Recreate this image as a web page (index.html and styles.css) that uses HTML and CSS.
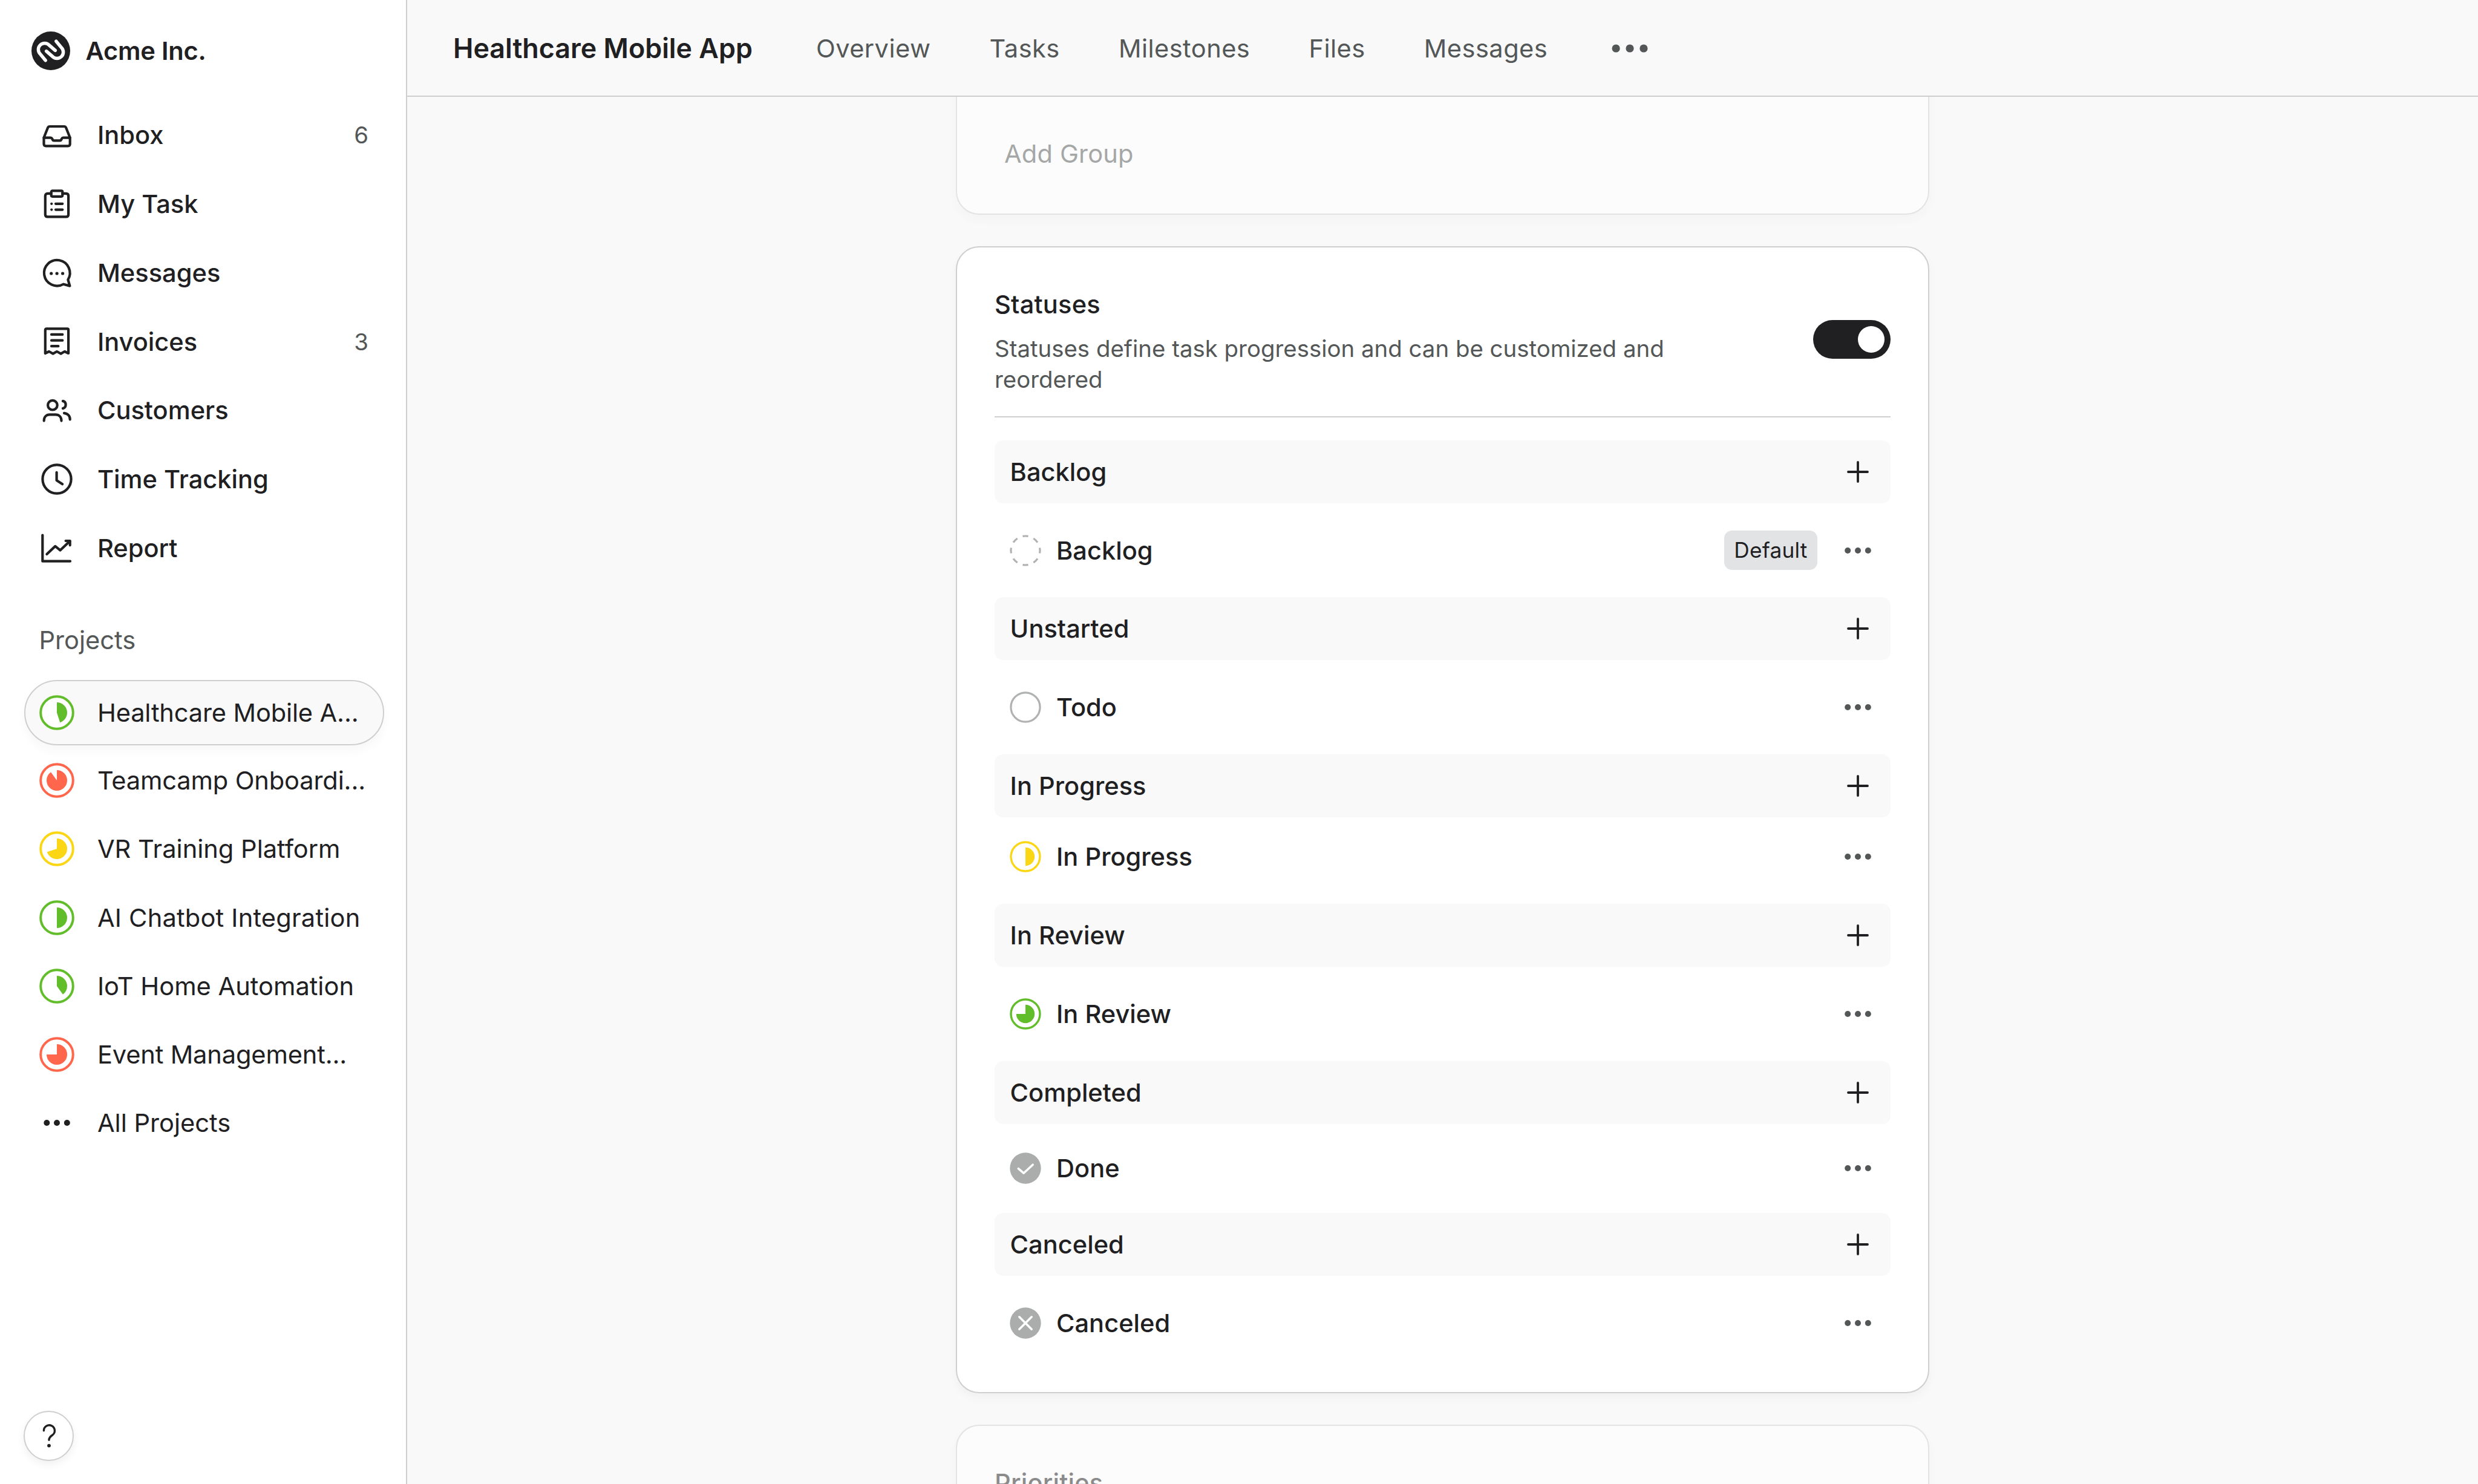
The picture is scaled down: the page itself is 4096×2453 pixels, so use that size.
FILE: index.html
```html
<!DOCTYPE html>
<html lang="en">
<head>
    <meta charset="UTF-8">
    <meta name="viewport" content="width=device-width, initial-scale=1.0">
    <title>Healthcare Mobile App</title>
    <link rel="stylesheet" href="styles.css">
</head>
<body>
    <aside class="sidebar">
        <div class="brand">
            <svg class="brand-logo" viewBox="0 0 70 70">
                <circle cx="35" cy="35" r="35" fill="#202022"/>
                <g fill="none" stroke="#fff" stroke-width="6" stroke-linecap="round">
                    <path d="M25.3 52.3L15.6 40.5A11.3 11.3 0 0 1 32 24.8L43 34.3"/>
                    <path d="M25.3 52.3L15.6 40.5A11.3 11.3 0 0 1 32 24.8L43 34.3" transform="rotate(180 35 35)"/>
                </g>
            </svg>
            <span>Acme Inc.</span>
        </div>

        <nav class="menu">
            <a class="menu-item">
                <svg class="icon" viewBox="0 0 58 58">
                    <path d="M7.5 33.6L14 17.2Q15 15 17.3 15H41Q43.2 15 44.2 17.2L50.7 33.6V44Q50.7 47.3 47.4 47.3H10.8Q7.5 47.3 7.5 44Z"/>
                    <path d="M7.5 33.6H18.6Q20.4 33.6 21 35L22 37Q22.6 38.3 24.2 38.3H34Q35.6 38.3 36.2 37L37.2 35Q37.8 33.6 39.6 33.6H50.7"/>
                </svg>
                <span>Inbox</span>
                <span class="count">6</span>
            </a>
            <a class="menu-item">
                <svg class="icon" viewBox="0 0 58 58">
                    <path d="M19.7 11.9H13.8Q9.8 11.9 9.8 15.9V46.4Q9.8 50.4 13.8 50.4H44.1Q48.1 50.4 48.1 46.4V15.9Q48.1 11.9 44.1 11.9H38.3"/>
                    <rect x="19.7" y="7.3" width="18.6" height="9.5" rx="2"/>
                    <path d="M20.2 28.8h.1M27 28.8H38.3M20.2 38.6h.1M27 38.6H38.3"/>
                </svg>
                <span>My Task</span>
            </a>
            <a class="menu-item">
                <svg class="icon" viewBox="0 0 58 58">
                    <path d="M39.8 47.7A21.3 21.3 0 1 1 47.4 40.3L50.4 50.6Z"/>
                    <g class="solid"><circle cx="19.7" cy="30" r="2.6"/><circle cx="29.1" cy="30" r="2.6"/><circle cx="38.6" cy="30" r="2.6"/></g>
                </svg>
                <span>Messages</span>
            </a>
            <a class="menu-item">
                <svg class="icon" viewBox="0 0 58 58">
                    <path d="M9.8 48V9.4Q9.8 7.4 11.8 7.4H46.1Q48.1 7.4 48.1 9.4V48L41.8 45L35.6 48.6L29 45L22.6 48.6L16.1 45Z"/>
                    <path d="M20 16.9H38.3M20 26.7H38.3M20 36.2H31.4"/>
                </svg>
                <span>Invoices</span>
                <span class="count">3</span>
            </a>
            <a class="menu-item">
                <svg class="icon" viewBox="0 0 58 58">
                    <circle cx="21.9" cy="20.7" r="7.8"/>
                    <path d="M38.9 13.9A6.3 6.3 0 0 1 38.9 26.1"/>
                    <path d="M7.7 46.6C7.7 40.5 11.5 36.4 17 36.4H27C32.7 36.4 36.5 40.5 36.5 46.6"/>
                    <path d="M41 33.8C47 34.5 50.7 38.5 50.7 44.4"/>
                </svg>
                <span>Customers</span>
            </a>
            <a class="menu-item">
                <svg class="icon" viewBox="0 0 58 58">
                    <circle cx="29" cy="29" r="23.6"/>
                    <path d="M28.6 17.8V31L38.2 37.2"/>
                </svg>
                <span>Time Tracking</span>
            </a>
            <a class="menu-item">
                <svg class="icon" viewBox="0 0 58 58">
                    <path d="M5.3 7.6V50.7H51"/>
                    <path d="M12.4 39L26.3 25.9L34.6 32.6L50.4 17.4"/>
                    <path d="M43.6 17H50.7V24.3"/>
                </svg>
                <span>Report</span>
            </a>
        </nav>

        <h2 class="section-label">Projects</h2>
        <nav class="projects">
            <a class="project active green">
                <svg class="progress" viewBox="0 0 58 58"><circle class="ring" cx="29" cy="29" r="26.8"/><circle class="pie" cx="29" cy="29" r="8.5" pathLength="100" stroke-dasharray="45 100"/></svg>
                <span class="shortened">Healthcare Mobile A...</span>
            </a>
            <a class="project red">
                <svg class="progress" viewBox="0 0 58 58"><circle class="ring" cx="29" cy="29" r="26.8"/><circle class="pie" cx="29" cy="29" r="8.5" pathLength="100" stroke-dasharray="90 100"/></svg>
                <span class="shortened">Teamcamp Onboardi...</span>
            </a>
            <a class="project yellow">
                <svg class="progress" viewBox="0 0 58 58"><circle class="ring" cx="29" cy="29" r="26.8"/><circle class="pie" cx="29" cy="29" r="8.5" pathLength="100" stroke-dasharray="70 100"/></svg>
                <span>VR Training Platform</span>
            </a>
            <a class="project green">
                <svg class="progress" viewBox="0 0 58 58"><circle class="ring" cx="29" cy="29" r="26.8"/><circle class="pie" cx="29" cy="29" r="8.5" pathLength="100" stroke-dasharray="50 100"/></svg>
                <span class="spaced">AI Chatbot Integration</span>
            </a>
            <a class="project green">
                <svg class="progress" viewBox="0 0 58 58"><circle class="ring" cx="29" cy="29" r="26.8"/><circle class="pie" cx="29" cy="29" r="8.5" pathLength="100" stroke-dasharray="40 100"/></svg>
                <span>IoT Home Automation</span>
            </a>
            <a class="project red">
                <svg class="progress" viewBox="0 0 58 58"><circle class="ring" cx="29" cy="29" r="26.8"/><circle class="pie" cx="29" cy="29" r="8.5" pathLength="100" stroke-dasharray="75 100"/></svg>
                <span class="shortened">Event Management...</span>
            </a>
            <a class="project">
                <svg class="icon" viewBox="0 0 58 58"><g class="solid"><circle cx="12.3" cy="29" r="5"/><circle cx="29" cy="29" r="5"/><circle cx="45.8" cy="29" r="5"/></g></svg>
                <span>All Projects</span>
            </a>
        </nav>

        <button class="help" aria-label="Help">
            <svg viewBox="-24 -24 48 48"><path d="M-8.6 -9.2A9 9 0 1 1 5.8 -2C2.2 .4 0 2.2 0 6.2"/><circle cx="0" cy="15.6" r="2.9"/></svg>
        </button>
    </aside>

    <main class="main">
        <header class="topbar">
            <h1>Healthcare Mobile App</h1>
            <nav class="tabs">
                <a>Overview</a>
                <a>Tasks</a>
                <a>Milestones</a>
                <a>Files</a>
                <a>Messages</a>
            </nav>
            <svg class="tabs-more" viewBox="0 0 60 20"><circle cx="7.1" cy="10" r="6.6"/><circle cx="30" cy="10" r="6.6"/><circle cx="52.9" cy="10" r="6.6"/></svg>
        </header>

        <div class="content">
            <section class="card faded card-groups">
                <p class="add-group">Add Group</p>
            </section>

            <section class="card">
                <div class="card-head">
                    <div class="card-text">
                        <h3>Statuses</h3>
                        <p>Statuses define task progression and can be customized and reordered</p>
                    </div>
                    <div class="toggle"><span class="knob"></span></div>
                </div>

                <div class="group">
                    <span>Backlog</span>
                    <svg class="plus" viewBox="0 0 40 40"><path d="M20 4V36M4 20H36"/></svg>
                </div>
                <div class="status">
                    <svg class="status-icon" viewBox="0 0 52 52"><circle class="dashed" cx="26" cy="26" r="24" pathLength="80" stroke-dasharray="5 5" stroke-dashoffset="2.5"/></svg>
                    <span>Backlog</span>
                    <span class="badge">Default</span>
                    <svg class="dots" viewBox="0 0 50 12"><circle cx="8.2" cy="6" r="5"/><circle cx="25" cy="6" r="5"/><circle cx="41.8" cy="6" r="5"/></svg>
                </div>

                <div class="group">
                    <span>Unstarted</span>
                    <svg class="plus" viewBox="0 0 40 40"><path d="M20 4V36M4 20H36"/></svg>
                </div>
                <div class="status">
                    <svg class="status-icon" viewBox="0 0 52 52"><circle class="dashed" cx="26" cy="26" r="24.1"/></svg>
                    <span>Todo</span>
                    <svg class="dots" viewBox="0 0 50 12"><circle cx="8.2" cy="6" r="5"/><circle cx="25" cy="6" r="5"/><circle cx="41.8" cy="6" r="5"/></svg>
                </div>

                <div class="group">
                    <span>In Progress</span>
                    <svg class="plus" viewBox="0 0 40 40"><path d="M20 4V36M4 20H36"/></svg>
                </div>
                <div class="status status-progress">
                    <svg class="status-icon yellow" viewBox="0 0 52 52"><circle class="ring" cx="26" cy="26" r="24"/><circle class="pie" cx="26" cy="26" r="7.6" pathLength="100" stroke-dasharray="50 100"/></svg>
                    <span>In Progress</span>
                    <svg class="dots" viewBox="0 0 50 12"><circle cx="8.2" cy="6" r="5"/><circle cx="25" cy="6" r="5"/><circle cx="41.8" cy="6" r="5"/></svg>
                </div>

                <div class="group">
                    <span>In Review</span>
                    <svg class="plus" viewBox="0 0 40 40"><path d="M20 4V36M4 20H36"/></svg>
                </div>
                <div class="status">
                    <svg class="status-icon green" viewBox="0 0 52 52"><circle class="ring" cx="26" cy="26" r="24"/><circle class="pie" cx="26" cy="26" r="7.6" pathLength="100" stroke-dasharray="75 100"/></svg>
                    <span>In Review</span>
                    <svg class="dots" viewBox="0 0 50 12"><circle cx="8.2" cy="6" r="5"/><circle cx="25" cy="6" r="5"/><circle cx="41.8" cy="6" r="5"/></svg>
                </div>

                <div class="group">
                    <span>Completed</span>
                    <svg class="plus" viewBox="0 0 40 40"><path d="M20 4V36M4 20H36"/></svg>
                </div>
                <div class="status status-done">
                    <svg class="status-icon" viewBox="0 0 52 52"><circle cx="26" cy="26" r="25.7" fill="#abacac"/><path class="mark" d="M14.3 26.6L23 34.2L38.2 20.2"/></svg>
                    <span>Done</span>
                    <svg class="dots" viewBox="0 0 50 12"><circle cx="8.2" cy="6" r="5"/><circle cx="25" cy="6" r="5"/><circle cx="41.8" cy="6" r="5"/></svg>
                </div>

                <div class="group">
                    <span>Canceled</span>
                    <svg class="plus" viewBox="0 0 40 40"><path d="M20 4V36M4 20H36"/></svg>
                </div>
                <div class="status">
                    <svg class="status-icon" viewBox="0 0 52 52"><circle cx="26" cy="26" r="25.7" fill="#abacac"/><path class="mark" d="M15.8 15.8L36.2 36.2M36.2 15.8L15.8 36.2"/></svg>
                    <span>Canceled</span>
                    <svg class="dots" viewBox="0 0 50 12"><circle cx="8.2" cy="6" r="5"/><circle cx="25" cy="6" r="5"/><circle cx="41.8" cy="6" r="5"/></svg>
                </div>
            </section>

            <section class="card faded">
                <div class="card-head">
                    <div class="card-text">
                        <h3>Priorities</h3>
                    </div>
                </div>
            </section>
        </div>
    </main>
</body>
</html>
```
FILE: styles.css
```css
* {
    box-sizing: border-box;
}

body {
    margin: 0;
    display: flex;
    height: 2453px;
    overflow: hidden;
    font-family: Inter, "Liberation Sans", sans-serif;
    font-size: 41.6px;
    color: #202022;
    background-color: #f9f9f9;
}

h1, h2, h3, p {
    margin: 0;
}

svg {
    flex-shrink: 0;
}

/* Sidebar */
.sidebar {
    display: flex;
    flex-direction: column;
    flex-shrink: 0;
    width: 673px;
    padding: 52px 36px 38px 40px;
    background-color: #fff;
    border-right: 2px solid #cfcfcf;
}

.brand {
    display: flex;
    align-items: center;
    gap: 25.6px;
    height: 64px;
    padding-left: 12px;
    margin-bottom: 50.6px;
    font-weight: 600;
    letter-spacing: -0.2px;
}

.brand-logo {
    width: 64px;
    height: 64px;
}

.menu-item, .project {
    display: flex;
    align-items: center;
    gap: 38.4px;
    padding-left: 24.5px;
    white-space: nowrap;
}

.menu-item {
    height: 113.7px;
    font-weight: 500;
}

.icon, .progress {
    width: 58px;
    height: 58px;
}

.icon {
    fill: none;
    stroke: #202022;
    stroke-width: 4.2;
    stroke-linecap: round;
    stroke-linejoin: round;
}

.icon .solid {
    fill: #202022;
    stroke: none;
}

.count {
    margin-left: auto;
    padding-right: 26px;
    font-size: 38.4px;
    font-weight: 400;
    color: #545757;
}

.section-label {
    height: 50px;
    margin: 71px 0 40.4px 24.5px;
    line-height: 50px;
    font-size: 41.6px;
    font-weight: 400;
    color: #545757;
}

.project {
    height: 113.1px;
}

.project .shortened {
    letter-spacing: -0.15px;
}

.project .spaced {
    letter-spacing: 0.2px;
}

.project.active {
    height: 108.4px;
    margin-bottom: 1.6px;
    padding-left: 22.5px;
    background-color: #f9f9f9;
    border: 2px solid #cfcfcf;
    border-radius: 54px;
    box-shadow: 0 10px 16px rgba(0, 0, 0, 0.03);
}

/* Progress circles, the pie is a thick dashed stroke */
.ring {
    fill: #fff;
    stroke: currentColor;
    stroke-width: 4;
}

.pie {
    fill: none;
    stroke: currentColor;
    stroke-width: 17;
    transform: rotate(-90deg);
    transform-origin: center;
}

.green .ring, .green .pie {
    color: #62bd2b;
}

.red .ring, .red .pie {
    color: #ff664b;
}

.yellow .ring, .yellow .pie {
    color: #fad614;
}

.help {
    display: flex;
    align-items: center;
    justify-content: center;
    width: 83px;
    height: 83px;
    margin-top: auto;
    margin-left: -1px;
    padding: 0;
    background-color: #fff;
    border: 2px solid #cfcfcf;
    border-radius: 50%;
    box-shadow: 0 6px 14px rgba(0, 0, 0, 0.06);
}

.help svg {
    width: 48px;
    height: 48px;
    fill: #202022;
}

.help path {
    fill: none;
    stroke: #202022;
    stroke-width: 3.4;
    stroke-linecap: round;
}

/* Main */
.main {
    display: flex;
    flex-direction: column;
    flex: 1;
    min-width: 0;
}

.topbar {
    display: flex;
    align-items: center;
    flex-shrink: 0;
    height: 160px;
    padding: 2px 0 0 76px;
    border-bottom: 2px solid #cfcfcf;
}

.topbar h1 {
    font-size: 44.8px;
    font-weight: 600;
}

.tabs {
    display: flex;
    gap: 97.2px;
    margin-left: 105px;
    letter-spacing: 0.45px;
    color: #545757;
}

.tabs-more {
    width: 60px;
    height: 20px;
    margin-left: 106px;
    fill: #545757;
}

.content {
    flex: 1;
    min-height: 0;
    display: flex;
    flex-direction: column;
    align-items: center;
    gap: 52px;
    overflow: hidden;
}

.card {
    flex-shrink: 0;
    width: 1609px;
    padding: 69px 62px 36px;
    background-color: #fff;
    border: 2px solid #cfcfcf;
    border-radius: 38.4px;
    box-shadow: 0 8px 16px rgba(0, 0, 0, 0.035);
}

.card.faded {
    opacity: 0.5;
}

/* Scrolled partly under the top bar */
.card-groups {
    height: 235px;
    margin-top: -40px;
}

.add-group {
    padding-left: 16px;
    line-height: 50px;
    margin-top: 38px;
    letter-spacing: 0.15px;
    color: #545757;
}

.card-head {
    display: flex;
    justify-content: space-between;
    align-items: center;
    padding-bottom: 35.5px;
    margin-bottom: 37.4px;
    border-bottom: 2px solid #cfcfcf;
}

.card-text {
    width: 1180px;
}

.card h3 {
    height: 50px;
    line-height: 50px;
    font-size: 41.6px;
    font-weight: 500;
    letter-spacing: 0.2px;
}

.card-text p {
    margin-top: 22.5px;
    font-size: 38.4px;
    line-height: 51.2px;
    color: #545757;
}

.toggle {
    display: flex;
    justify-content: flex-end;
    width: 128px;
    height: 64px;
    margin-bottom: 9px;
    padding: 9.6px;
    background-color: #202022;
    border-radius: 32px;
}

.knob {
    width: 44.8px;
    height: 44.8px;
    background-color: #fff;
    border-radius: 50%;
}

.group {
    display: flex;
    align-items: center;
    justify-content: space-between;
    height: 104px;
    padding: 0 34.5px 0 25.6px;
    font-weight: 500;
    background-color: #f9f9f9;
    border-radius: 14px;
}

.plus {
    width: 40px;
    height: 40px;
    fill: none;
    stroke: #202022;
    stroke-width: 3.8;
    stroke-linecap: round;
}

.status {
    display: flex;
    align-items: center;
    height: 155.7px;
    padding: 0 29.5px 0 25px;
    font-weight: 500;
}

.status-progress {
    height: 142.7px;
    padding-bottom: 13px;
}

.status-done {
    height: 147.6px;
}

.status-icon {
    width: 52px;
    height: 52px;
    margin-right: 25px;
}

.status-icon .dashed {
    fill: none;
    stroke: #b0b1b1;
    stroke-width: 3.2;
}

.status-icon .ring {
    stroke-width: 3.4;
}

.status-icon .pie {
    stroke-width: 15.2;
}

.status-icon .mark {
    fill: none;
    stroke: #fff;
    stroke-width: 3.6;
    stroke-linecap: round;
    stroke-linejoin: round;
}

.badge {
    height: 65.6px;
    margin-left: auto;
    margin-right: 42px;
    padding: 0 16px;
    line-height: 65.6px;
    font-size: 35.2px;
    font-weight: 400;
    letter-spacing: 0.25px;
    background-color: #e2e3e5;
    border-radius: 12.8px;
}

.dots {
    width: 50px;
    height: 12px;
    margin-left: auto;
    fill: #545757;
}

.badge + .dots {
    margin-left: 0;
}
```
